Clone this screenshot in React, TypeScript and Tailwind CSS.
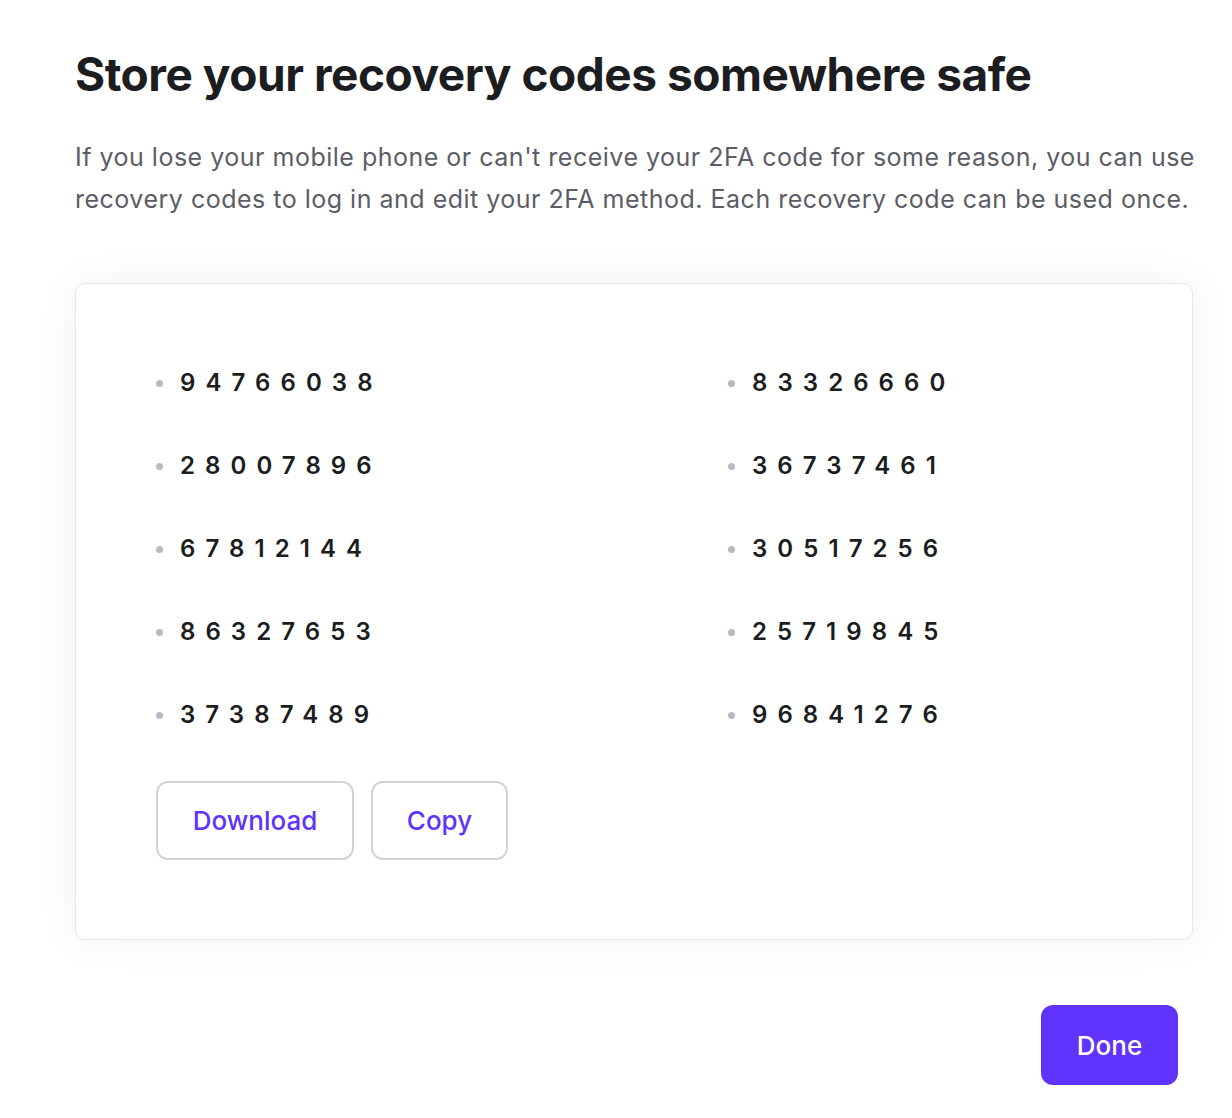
const codes = [
  ["94766038", "83326660"],
  ["28007896", "36737461"],
  ["67812144", "30517256"],
  ["86327653", "25719845"],
  ["37387489", "96841276"],
];

function CodeItem({ code }: { code: string }) {
  return (
    <div className="flex items-center gap-[17px]">
      <span className="w-[7px] h-[7px] rounded-full bg-[#b6bac2]" />
      <span className="text-[24px] font-semibold tracking-[0.42em] text-[#1c1d21] leading-none">
        {code}
      </span>
    </div>
  );
}

export default function App() {
  return (
    <div
      className="min-h-screen bg-white pl-[75px] pr-[30px] pt-[46px]"
      style={{ fontFamily: "Inter, 'Noto Sans', sans-serif" }}
    >
      <h1 className="text-[46px] font-bold text-[#1c1d21] leading-[56px] tracking-[-0.01em]">
        Store your recovery codes somewhere safe
      </h1>
      <p className="mt-[34px] text-[25px] leading-[42px] tracking-[0.02em] text-[#5b5d66] whitespace-nowrap">
        If you lose your mobile phone or can't receive your 2FA code for some reason, you can use
        <br />
        recovery codes to log in and edit your 2FA method. Each recovery code can be used once.
      </p>

      <div className="mt-[63px] w-[1118px] h-[657px] rounded-[10px] border border-[#e6e6eb] bg-white shadow-[0_0_40px_rgba(0,0,0,0.06)] pl-[80px] pt-[87px]">
        <div className="grid grid-cols-[572px_1fr] gap-y-[59px]">
          {codes.map(([a, b]) => (
            <>
              <CodeItem key={a} code={a} />
              <CodeItem key={b} code={b} />
            </>
          ))}
        </div>
        <div className="mt-[54px] flex gap-[17px]">
          <button className="h-[79px] w-[198px] rounded-[12px] border-2 border-[#d2d2d8] text-[26px] font-medium text-[#5f33ff]">
            Download
          </button>
          <button className="h-[79px] w-[137px] rounded-[12px] border-2 border-[#d2d2d8] text-[26px] font-medium text-[#5f33ff]">
            Copy
          </button>
        </div>
      </div>

      <div className="mt-[65px] flex justify-end w-[1103px]">
        <button className="h-[80px] w-[137px] rounded-[12px] bg-[#6033ff] text-[26px] font-medium text-white">
          Done
        </button>
      </div>
    </div>
  );
}
